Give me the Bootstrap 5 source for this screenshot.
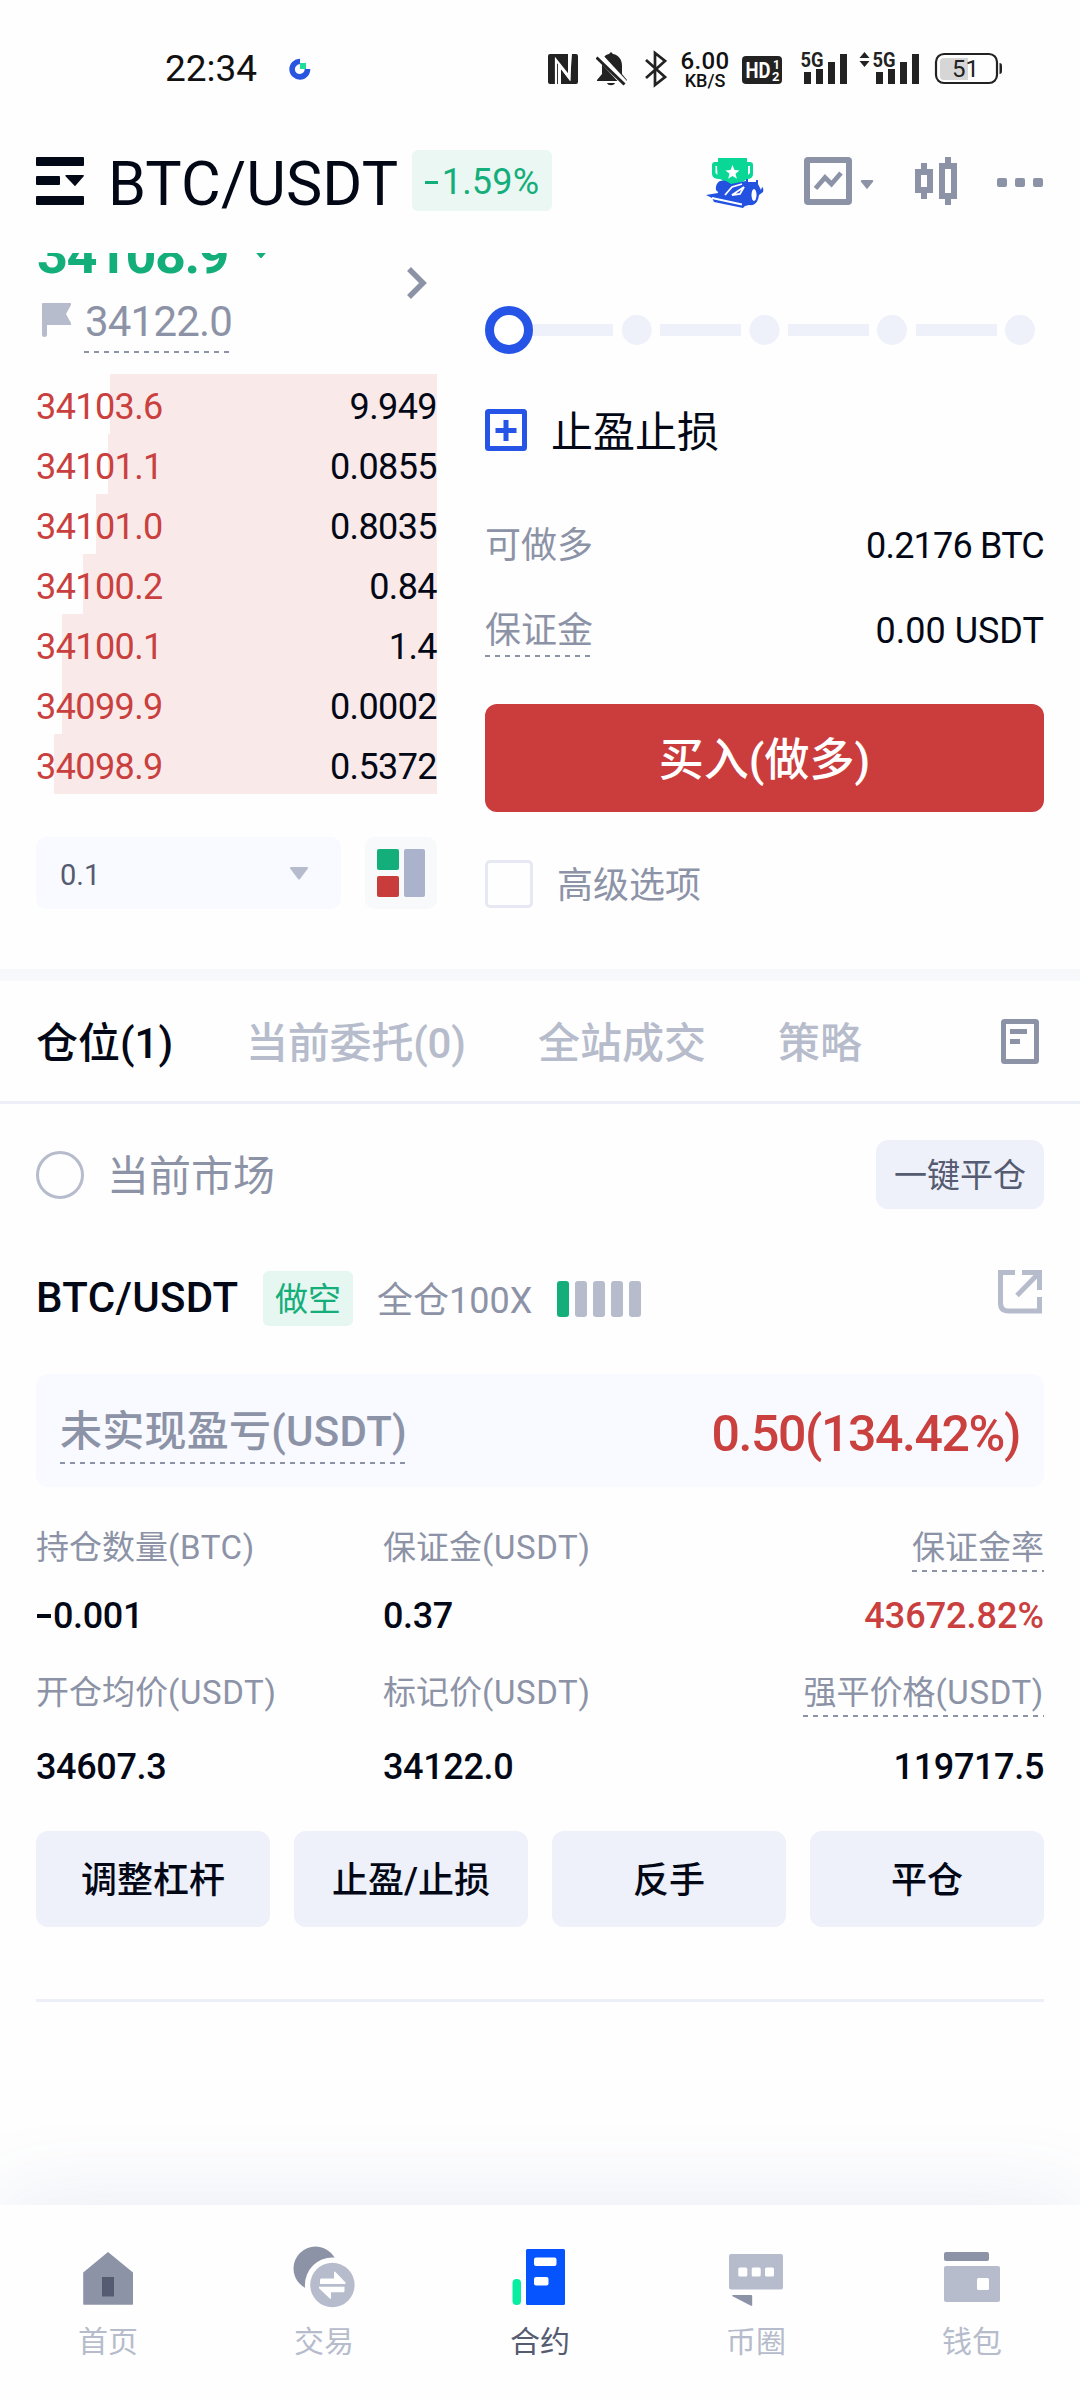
<!DOCTYPE html>
<html lang="zh-CN">
<head>
<meta charset="utf-8">
<meta name="viewport" content="width=device-width, initial-scale=1">
<title>BTC/USDT 合约</title>
<link href="https://cdn.jsdelivr.net/npm/bootstrap@5.3.0/dist/css/bootstrap.min.css" rel="stylesheet">
<style>
:root{--ink:#030816;--slate:#8d93a7;--mist:#b6bccb;--steel:#555b70;--up:#14ae7b;--down:#c9403f;--pale:#eef0fa}
body{width:1080px;height:2400px;margin:0;background:#fefefe;color:var(--ink);font-family:Roboto,"Noto Sans CJK SC",sans-serif;overflow-x:hidden}
svg{display:block;flex:none}
.c-slate{color:var(--slate)}.c-mist{color:var(--mist)}.c-steel{color:var(--steel)}.c-up{color:var(--up)}.c-down{color:var(--down)}
.f30{font-size:30px}.f33{font-size:33px}.f36{font-size:36px}.f42{font-size:42px}
.w5{font-weight:500}
.dashline{background:repeating-linear-gradient(90deg,var(--slate) 0 5px,transparent 5px 10px) left bottom/100% 2px no-repeat}
.statusbar{height:140px;padding-left:165px}
.clock{font-size:37px;line-height:138px;color:#111;width:94px}
.speed{width:52px;margin-left:12px;text-align:center;color:#111;font-weight:500}
.speed-n{font-size:24px;line-height:20px;letter-spacing:.4px}
.speed-u{font-size:18px;line-height:19px}
.topbar{height:113px;padding:0 36px}
.pair{font-size:61px;line-height:88px;margin-left:24px;width:304px;letter-spacing:.15px;white-space:nowrap}
.chg{width:140px;height:61px;line-height:65px;border-radius:6px;background:#eaf7f3;font-size:36px;letter-spacing:.2px;text-align:center}
.trade{height:716px;padding:0 36px;gap:48px}
.book{width:401px}
.order{width:559px;padding-top:53px}
.last-row{height:32px;overflow:hidden}
.last{font-size:54px;line-height:60px;font-weight:700;letter-spacing:-1.500px;padding-left:1px}
.markp{font-size:42px;line-height:62px;height:62px;letter-spacing:-.8px;width:146px;padding-left:1px;white-space:nowrap}
.lvl{height:60px;line-height:66px;font-size:36px;letter-spacing:-.6px}
.depth{background:linear-gradient(#f9eae9,#f9eae9) right/var(--w) 100% no-repeat}
.pick{width:305px;height:72px;background:#f8faff;border-radius:10px;padding:0 33px 0 24px;font-size:29px;line-height:76px}
.pick span{padding-top:3px}
.layoutbtn{width:72px;height:72px;background:#f7f9fb;border-radius:10px}
.line50{line-height:52px}
.buy,.buy:hover{height:108px;border:0;border-radius:12px;background:#cb3d3c;color:#fff;font-size:45px;font-weight:500;padding:0;line-height:114px}
.boxy{width:48px;height:48px;border:3px solid #e6e9f3;border-radius:5px}
.band{height:12px;background:#f7f8fb}
.tabs{height:123px;border-bottom:3px solid #eceef8;padding:0 36px;font-size:42px;font-weight:500}
.tabs span{line-height:116px;padding-top:5px}
.ring{width:48px;height:48px;border:3px solid var(--mist);border-radius:50%}
.soft,.soft:hover{background:var(--pale);border:0;border-radius:12px;padding:0;color:var(--ink)}
.tagup{width:90px;height:55px;border-radius:6px;background:#e6f6f0;line-height:58px;text-align:center}
.lev i{display:block;width:12px;height:36px;border-radius:3px;background:var(--mist)}
.lev i:first-child{background:var(--up)}
.pnl{height:113px;background:#f8faff;border-radius:12px;padding:0 24px}
.grid3{display:grid;grid-template-columns:347px 1fr auto;font-weight:500}
.lab{font-size:33px;line-height:52px;height:50px;color:var(--slate);font-weight:400;white-space:nowrap}
.lab b{font-weight:400;letter-spacing:.65px}
.val{font-size:36px;line-height:50px;letter-spacing:-.35px}
.act{height:96px;width:0;line-height:101px;white-space:nowrap}
.bottomnav{height:195px;background:#fefefe;box-shadow:0 0 90px rgba(80,105,180,.13)}
.bottomnav a{width:216px;color:var(--mist);text-decoration:none;font-size:30px;line-height:43px;padding-top:35px}
.bottomnav a.on{color:var(--steel)}
</style>
</head>
<body class="d-flex flex-column">

<header>
  <div class="statusbar d-flex align-items-start">
    <div class="clock">22:34</div>
    <svg width="22" height="22" viewBox="0 0 22 22" style="margin:58px 0 0 30px"><path d="M11 3.500A7.700 7.700 0 1 0 18.500 11" fill="none" stroke="#2655e0" stroke-width="5.600"/><rect x="11" y="5" width="6" height="6" fill="#1fdd9a"/></svg>
    <div class="d-flex align-items-start" style="padding-top:44px;margin-left:237px">
      <svg width="30" height="44" viewBox="548 44 30 44"><path fill="#222" d="M550 54h18v22l-10-13v21h-8a2 2 0 0 1-2-2V56a2 2 0 0 1 2-2zM572 54h4a2 2 0 0 1 2 2v26a2 2 0 0 1-2 2h-15V69l9 12z"/><path fill="none" stroke="#fff" stroke-width="2.200" d="M556 84V60l12 15M569.500 54v24L560 66"/></svg>
      <svg width="31" height="44" viewBox="596 44 31 44" style="margin-left:18px"><path fill="#222" d="M609 54l2-2 2 2c6 1 9 6 9 12v8l5 6v1h-30v-1l5-6v-9c0-6 2-10 7-11zM607 83h8c-1 3-7 3-8 0z"/><path stroke="#fff" stroke-width="7" d="M598 55l29 31"/><path stroke="#222" stroke-width="3" d="M596.500 57.500l28 27"/></svg>
      <svg width="22" height="44" viewBox="645 44 22 44" style="margin-left:18px"><path fill="none" stroke="#222" stroke-width="2.700" d="M646 60l19 17-10 8V53l10 8-19 17"/></svg>
      <div class="speed" style="padding-top:7px"><div class="speed-n">6.00</div><div class="speed-u">KB/S</div></div>
      <svg width="40" height="44" viewBox="741 44 40 44" style="margin-left:11px"><rect x="741" y="56" width="40" height="28" rx="4" fill="#222"/><g fill="#fff" font-family="Roboto" font-weight="700"><text x="744.500" y="78" font-size="22" textLength="25" lengthAdjust="spacingAndGlyphs">HD</text><text x="772" y="69" font-size="12">1</text><text x="771" y="81" font-size="13">2</text></g></svg>
      <svg width="204" height="44" viewBox="799 44 204 44" style="margin-left:18px">
        <g fill="#222"><g font-family="Roboto" font-weight="700" font-size="20"><text x="799.500" y="67" textLength="23" lengthAdjust="spacingAndGlyphs">5G</text><text x="871.500" y="67" textLength="23" lengthAdjust="spacingAndGlyphs">5G</text></g>
        <path d="M803 72h7v12h-7zM815 69h7v15h-7zM827 62h7v22h-7zM839 54h7v30h-7zM875 72h7v12h-7zM887 69h7v15h-7zM899 62h7v22h-7zM911 54h7v30h-7zM863.500 52l5 6h-10zM863.500 67l-5-6h10z"/></g>
        <rect x="935" y="54" width="61" height="29" rx="8" fill="none" stroke="#222" stroke-width="2.200"/>
        <path fill="#d6d6d6" d="M943 58h24v22h-24a4 4 0 0 1-4-4V62a4 4 0 0 1 4-4z"/><path d="M998.500 63q2.500 0 2.500 3v5q0 3-2.500 3z" fill="#222"/>
        <text x="964.500" y="77" text-anchor="middle" font-family="Roboto" font-size="24" fill="#222">51</text>
      </svg>
    </div>
  </div>

  <nav class="topbar d-flex align-items-start">
    <svg width="48" height="48" viewBox="36 157 48 48" style="margin-top:17px"><g fill="#030816"><rect x="36" y="157" width="48" height="9" rx="1"/><rect x="36" y="176" width="24" height="9" rx="1"/><rect x="36" y="196" width="48" height="9" rx="1"/><path d="M66 175h17q1.500 0 .5 1.500L75 186.300l-9-9.500q-1.500-1.800 0-1.800z"/></g></svg>
    <div class="pair">BTC/USDT</div>
    <div class="chg c-up" style="margin-top:10px"><span style="display:inline-block;width:13px;height:3px;background:currentColor;vertical-align:10px;margin-right:4px"></span>1.59%</div>
    <svg width="337" height="54" viewBox="706 155 337 54" style="margin-left:154px;margin-top:15px">
      <path fill="#08d795" d="M718 158h29v4h3q3 0 3 3v9q0 5-6 5l-3 2-6 4h-9l-7-5-2-1q-8 0-8-5v-9q0-3 3-3h3z"/><path fill="#fff" d="M717 166h-1.500v7l2 2zM748 166h2v7l-2 2z"/><path fill="#fff" d="M732.500 165l2 5 5 .4-4 3.400 1.400 5-4.400-2.700-4.400 2.700 1.400-5-4-3.400 5-.4z"/>
      <path fill="#2352e0" d="M706 195l12-2v-1l-2-2c-1-8 5-11 10-9l5 3 15-3v-2h2v3h8v-2h2v4l3 6 1-3q2 1 1 5l-4 3c-1 7-4 11-10 10l-4 1-2 2-29-6-2-4z"/>
      <path fill="none" stroke="#fff" stroke-width="1.800" d="M712 198l30 6.500M725 195l7-8 10-3M732 195l12-8-4 7z"/><ellipse cx="754" cy="195" rx="2.500" ry="6" fill="#fff"/>
      <g fill="none" stroke="#8d93a7" stroke-width="6"><rect x="807" y="160" width="42" height="42" rx="1"/><path stroke-width="4.800" d="M815.500 188.500l9.500-11 6.500 6.500 9.500-11"/></g>
      <path fill="#8d93a7" d="M862 180h10q2 0 1 1.800l-6 7.400-6-7.400q-1-1.800 1-1.800z"/>
      <g fill="#8d93a7"><path fill-rule="evenodd" d="M915 169h6v-6h6v6h6v24h-6v6h-6v-6h-6zm6 6v12h6v-12z"/><path fill-rule="evenodd" d="M939 163h6v-6h6v6h6v36h-6v6h-6v-6h-6zm6 6v24h6v-24z"/><rect x="997" y="178" width="10" height="9" rx="2"/><rect x="1015" y="178" width="10" height="9" rx="2"/><rect x="1033" y="178" width="10" height="9" rx="2"/></g>
    </svg>
  </nav>
</header>

<section class="trade d-flex">
  <div class="book">
    <div class="d-flex justify-content-between" style="height:121px">
      <div>
        <div class="last-row d-flex align-items-end"><div class="last c-up">34108.9</div><svg width="18" height="32" viewBox="0 0 18 32" style="margin-left:24px"><path d="M2.500 -2h13L10 4.500q-1 1-2 0z" fill="#14ae7b"/></svg></div>
        <div class="d-flex" style="padding-top:6px">
          <svg width="30" height="36" viewBox="41 303 30 36" style="margin:12px 13px 0 5px"><path fill="#b6bccb" d="M42 304q0-1 1-1h27q2 0 1 2l-5 9 5 9q1 2-1 2H47v10q0 2-2.500 2T42 335z"/></svg>
          <div class="markp c-slate dashline">34122.0</div>
        </div>
      </div>
      <svg width="22" height="34" viewBox="406 266 22 34" style="margin:13px 9px 0 0"><path d="M409 269l14 14-14 14" fill="none" stroke="#8d93a7" stroke-width="5.500"/></svg>
    </div>
    <div class="lvl depth d-flex justify-content-between" style="--w:327px"><span class="c-down">34103.6</span><span>9.949</span></div>
    <div class="lvl depth d-flex justify-content-between" style="--w:329px"><span class="c-down">34101.1</span><span>0.0855</span></div>
    <div class="lvl depth d-flex justify-content-between" style="--w:341px"><span class="c-down">34101.0</span><span>0.8035</span></div>
    <div class="lvl depth d-flex justify-content-between" style="--w:354px"><span class="c-down">34100.2</span><span>0.84</span></div>
    <div class="lvl depth d-flex justify-content-between" style="--w:375px"><span class="c-down">34100.1</span><span>1.4</span></div>
    <div class="lvl depth d-flex justify-content-between" style="--w:375px"><span class="c-down">34099.9</span><span>0.0002</span></div>
    <div class="lvl depth d-flex justify-content-between" style="--w:383px"><span class="c-down">34098.9</span><span>0.5372</span></div>
    <div class="d-flex justify-content-between" style="margin-top:43px">
      <div class="pick c-steel d-flex justify-content-between align-items-center"><span>0.1</span><svg width="18" height="13" viewBox="0 0 18 13"><path fill="#b6bccb" d="M1.500 0h15q2.500 0 1 2L10 12q-1 1-2 0L.5 2q-1.500-2 1-2z"/></svg></div>
      <div class="layoutbtn d-flex align-items-center justify-content-center"><svg width="48" height="48" viewBox="0 0 48 48"><rect width="22" height="21" rx="2" fill="#14ae7b"/><rect y="27" width="22" height="21" rx="2" fill="#c93c3c"/><rect x="27" width="21" height="48" rx="2" fill="#abb2cb"/></svg></div>
    </div>
  </div>

  <div class="order">
    <svg width="559" height="48" viewBox="485 306 559 48"><g fill="#eef0fa"><path d="M530 324h83v12h-83zM660 324h81v12h-81zM788 324h81v12h-81zM916 324h81v12h-81z"/><circle cx="636.800" cy="330" r="15"/><circle cx="764.500" cy="330" r="15"/><circle cx="892" cy="330" r="15"/><circle cx="1020" cy="330" r="15"/></g><circle cx="509" cy="330" r="19.500" fill="#fff" stroke="#2554e6" stroke-width="9"/></svg>
    <div class="d-flex align-items-center f42" style="margin-top:46px;height:60px">
      <svg width="42" height="42" viewBox="0 0 42 42"><rect x="2.500" y="2.500" width="37" height="37" rx="1" fill="none" stroke="#2554e6" stroke-width="5"/><path d="M21 11v21M10.500 21.500h21" stroke="#2554e6" stroke-width="5"/></svg>
      <span style="margin-left:24px;padding-top:5px">止盈止损</span>
    </div>
    <div class="d-flex justify-content-between f36 line50" style="margin-top:60px;height:50px"><span class="c-slate">可做多</span><span style="letter-spacing:-.8px">0.2176 BTC</span></div>
    <div class="d-flex justify-content-between f36 line50" style="margin-top:35px;height:52px"><span class="c-slate dashline">保证金</span><span>0.00 USDT</span></div>
    <button class="btn buy w-100 d-block" style="margin-top:47px">买入(做多)</button>
    <div class="d-flex align-items-center f36 c-slate" style="margin-top:48px;height:48px"><span class="boxy"></span><span style="margin-left:24px;line-height:48px;padding-top:3px">高级选项</span></div>
  </div>
</section>

<div class="band"></div>

<nav class="tabs d-flex align-items-center c-mist">
  <span style="width:210px;color:var(--ink)">仓位(1)</span><span style="width:292px;letter-spacing:-.2px">当前委托(0)</span><span style="width:240px">全站成交</span><span>策略</span>
  <svg class="ms-auto" width="38" height="45" viewBox="0 0 38 45" style="margin-right:5px"><rect x="2.500" y="2.500" width="33" height="40" rx="1" fill="none" stroke="#8d93a7" stroke-width="5"/><path d="M9 12.500h17M9 22.500h10" stroke="#8d93a7" stroke-width="5"/></svg>
</nav>

<main class="flex-grow-1" style="padding:36px 36px 0">
  <div class="d-flex align-items-center" style="height:69px">
    <span class="ring"></span><span class="f42 c-slate" style="margin-left:23px;line-height:64px;padding-top:4px">当前市场</span>
    <button class="btn soft f33 ms-auto" style="width:168px;height:69px;line-height:72px;color:var(--steel)">一键平仓</button>
  </div>

  <div class="d-flex align-items-start" style="margin-top:60px;height:105px">
    <span class="f42 w5" style="line-height:58px;width:227px;white-space:nowrap;letter-spacing:.35px">BTC/USDT</span>
    <span class="tagup f33 c-up" style="margin-top:2px">做空</span>
    <span class="f36 c-slate" style="margin-left:24px;line-height:64px;width:180px">全仓100X</span>
    <span class="lev d-flex" style="gap:6px;margin-top:12px"><i></i><i></i><i></i><i></i><i></i></span>
    <svg class="ms-auto" width="46" height="46" viewBox="997 1268 46 46" style="margin-right:1px"><g fill="none" stroke="#b6bccb" stroke-width="5"><path d="M1015 1271.500h-14.500V1302q0 8 8 8h31v-14"/><path d="M1022 1271.500h17.500V1289M1038 1273l-21 21.500"/></g></svg>
  </div>

  <div class="pnl d-flex align-items-center justify-content-between">
    <span class="f42 c-slate w5 dashline" style="line-height:61px;height:63px;margin-top:3px;letter-spacing:.25px">未实现盈亏(USDT)</span>
    <span class="c-down w5" style="font-size:50px;letter-spacing:-1.400px;line-height:60px;padding-top:6px">0.50(134.42%)</span>
  </div>

  <div class="grid3" style="margin-top:35px">
    <div class="lab">持仓数量<b>(BTC)</b></div><div class="lab">保证金<b>(USDT)</b></div><div class="d-flex justify-content-end"><div class="lab dashline">保证金率</div></div>
    <div class="val" style="margin-top:19px"><span style="display:inline-block;width:14px;height:4px;background:currentColor;vertical-align:10px;margin:0 2px 0 1px"></span>0.001</div><div class="val" style="margin-top:19px">0.37</div><div class="val c-down text-end" style="margin-top:19px;letter-spacing:0">43672.82%</div>
    <div class="lab" style="margin-top:26px">开仓均价<b>(USDT)</b></div><div class="lab" style="margin-top:26px">标记价<b>(USDT)</b></div><div class="lab dashline" style="margin-top:26px">强平价格<b>(USDT)</b></div>
    <div class="val" style="margin-top:25px">34607.3</div><div class="val" style="margin-top:25px">34122.0</div><div class="val text-end" style="margin-top:25px">119717.5</div>
  </div>

  <div class="d-flex" style="gap:24px;margin-top:39px">
    <button class="btn soft flex-fill f36 w5 act">调整杠杆</button><button class="btn soft flex-fill f36 w5 act">止盈/止损</button><button class="btn soft flex-fill f36 w5 act">反手</button><button class="btn soft flex-fill f36 w5 act">平仓</button>
  </div>
  <div style="height:3px;background:#eceef8;margin-top:72px"></div>
</main>

<nav class="bottomnav d-flex">
  <a href="#" class="d-flex flex-column align-items-center"><svg width="216" height="80" viewBox="0 2240 216 80"><path fill="#8d93a7" d="M108 2252l25 20.500V2304q0 .8-.8.800H84q-.8 0-.8-.800v-31.500z"/><path fill="#555b70" d="M102 2277h12v19.500h-12z"/></svg>首页</a>
  <a href="#" class="d-flex flex-column align-items-center"><svg width="216" height="80" viewBox="216 2240 216 80"><circle cx="315.500" cy="2268.500" r="22" fill="#8d93a7"/><circle cx="332.400" cy="2285" r="27.500" fill="#fefefe"/><circle cx="332.400" cy="2285" r="22.200" fill="#b6bccb"/><path fill="#fefefe" d="M321 2278.500h13v-6.500q.5-1 1.500 0l10 10.500v1.500h-25.500v-4q0-1.500 1-1.500zM319 2286.700h25.500v4q0 1.500-1 1.500h-12.500v6q-.5 1-1.500 0l-10.500-10z"/></svg>交易</a>
  <a href="#" class="on d-flex flex-column align-items-center"><svg width="216" height="80" viewBox="432 2240 216 80"><rect x="512.500" y="2279" width="8.500" height="26" rx="4" fill="#07eea0"/><rect x="526" y="2249" width="39" height="56" rx="1.500" fill="#0554ff"/><rect x="534" y="2257.500" width="22.500" height="8.500" rx="2" fill="#fff"/><rect x="534" y="2277" width="14.500" height="8.500" rx="2" fill="#fff"/></svg>合约</a>
  <a href="#" class="d-flex flex-column align-items-center"><svg width="216" height="80" viewBox="648 2240 216 80"><rect x="729" y="2254" width="54" height="35.500" rx="2" fill="#b6bccb"/><g fill="#fff"><rect x="738.300" y="2267.500" width="9" height="9" rx="1.500"/><rect x="751.700" y="2267.500" width="9" height="9" rx="1.500"/><rect x="765" y="2267.500" width="9" height="9" rx="1.500"/></g><path fill="#8d93a7" d="M733 2295h18q1.200 0 1.200 1.200v9q0 1-1.200.5l-18.500-9.500q-.8-1.200.5-1.200z"/></svg>币圈</a>
  <a href="#" class="d-flex flex-column align-items-center"><svg width="216" height="80" viewBox="864 2240 216 80"><rect x="944" y="2252" width="45" height="9" rx="2" fill="#8d93a7"/><rect x="944" y="2266" width="56" height="36" rx="2" fill="#b6bccb"/><rect x="977" y="2278" width="12" height="12" rx="1.500" fill="#fff"/></svg>钱包</a>
</nav>
<script src="https://cdn.jsdelivr.net/npm/bootstrap@5.3.0/dist/js/bootstrap.bundle.min.js"></script>
</body>
</html>
